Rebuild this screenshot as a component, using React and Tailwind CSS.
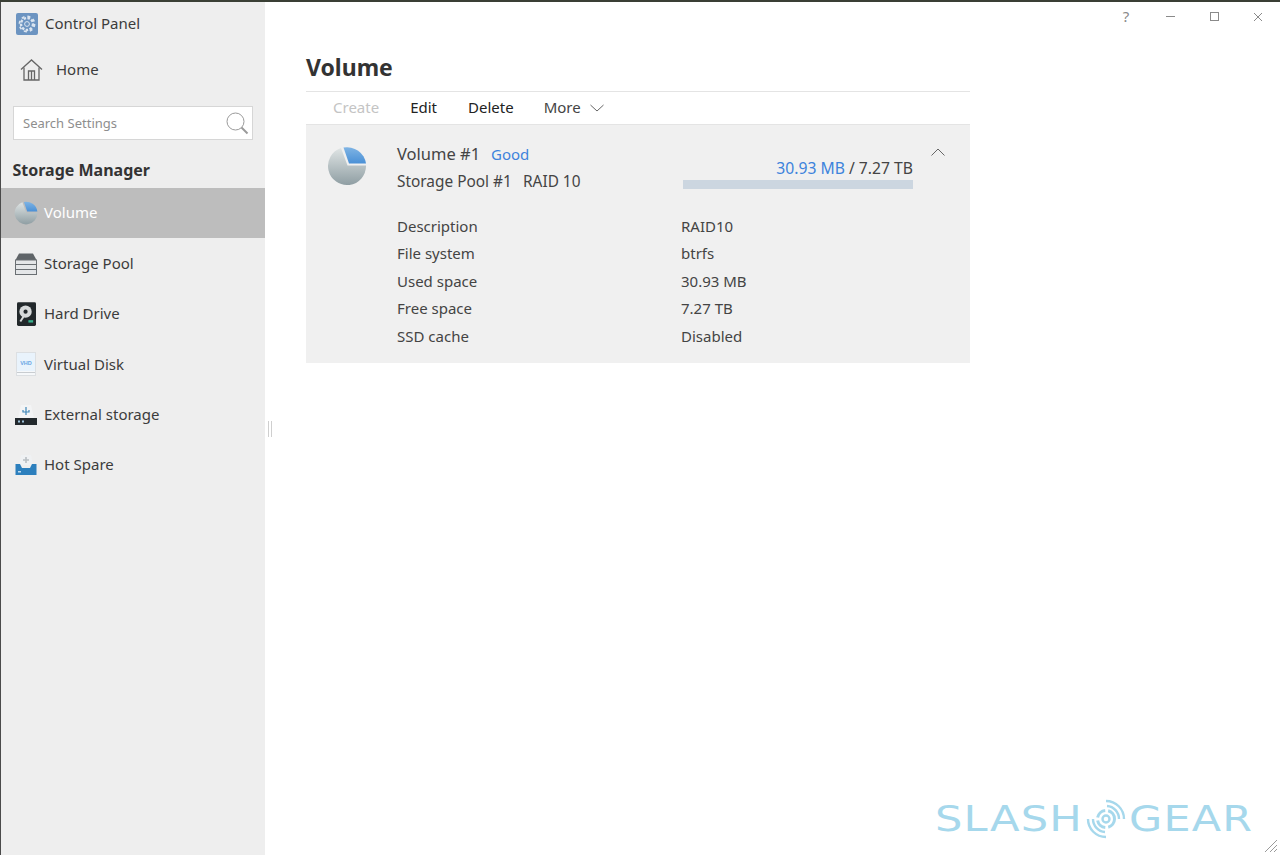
import React from "react";

const PieIcon = ({ size = 40 }) => (
  <svg width={size} height={size} viewBox="0 0 40 40">
    <defs>
      <linearGradient id="pieGrey" x1="0" y1="0" x2="0" y2="1">
        <stop offset="0" stopColor="#dfe4e4" />
        <stop offset="1" stopColor="#8f9ea3" />
      </linearGradient>
      <linearGradient id="pieBlue" x1="0" y1="0" x2="0" y2="1">
        <stop offset="0" stopColor="#7fb4e4" />
        <stop offset="1" stopColor="#4a90d6" />
      </linearGradient>
    </defs>
    <path d="M14 2 L20.5 19.5 L39 19.5 A19 19 0 1 1 14 2 Z" fill="url(#pieGrey)" />
    <path d="M16.5 1.6 A19 19 0 0 1 39 17.5 L22 17.5 Z" fill="url(#pieBlue)" />
  </svg>
);

const PoolIcon = () => (
  <svg width="22" height="22" viewBox="0 0 22 22">
    <path d="M4 0.5 H18 L21.5 7 H0.5 Z" fill="#5f6468" />
    <rect x="0.5" y="7" width="21" height="14.5" fill="#e4e6e8" stroke="#6a6f73" />
    <path d="M1 11.5 H21 M1 16.5 H21" stroke="#6a6f73" />
  </svg>
);

const DriveIcon = () => (
  <svg width="19" height="24" viewBox="0 0 20 25">
    <rect width="20" height="25" rx="1.5" fill="#22282b" />
    <circle cx="9" cy="10" r="6.5" fill="#d7dadb" />
    <circle cx="9" cy="10" r="2.2" fill="#22282b" />
    <path d="M7 15 L3.5 20.5" stroke="#d7dadb" strokeWidth="2" />
    <rect x="12" y="19" width="5" height="2.5" fill="#37b28e" />
  </svg>
);

const DiskIcon = () => (
  <svg width="20" height="24" viewBox="0 0 20 24">
    <rect x="0.5" y="0.5" width="19" height="23" fill="#f6f8fa" stroke="#dcdfe2" />
    <rect x="1" y="1" width="18" height="18" fill="#e9f3fc" />
    <path d="M1 20.5 H19" stroke="#c8ccd0" />
    <text x="10" y="12.5" textAnchor="middle" fontSize="5.5" fontWeight="700" fill="#6aa6e4" fontFamily="Liberation Sans, sans-serif">VHD</text>
  </svg>
);

const ExternalIcon = () => (
  <svg width="22" height="22" viewBox="0 0 22 22">
    <path d="M3 14 L6 1 H16 L19 14 Z" fill="#f3f4f5" />
    <path d="M11 3 V11 M8 6 V8 H14 V6" stroke="#3f86b8" strokeWidth="1.2" fill="none" />
    <rect y="14" width="22" height="7" fill="#23292d" />
    <rect x="3" y="16.5" width="2" height="2" fill="#9ec3dc" />
    <rect x="7" y="16.5" width="2" height="2" fill="#9ec3dc" />
  </svg>
);

const SpareIcon = () => (
  <svg width="22" height="22" viewBox="0 0 22 22">
    <path d="M4 11 L6 1 H16 L18 11 Z" fill="#eff1f3" />
    <path d="M11 3 V9 M8 6 H14" stroke="#b9bfc4" strokeWidth="1.6" />
    <path d="M0.5 10 H5 L7 14 H15 L17 10 H21.5 V21 H0.5 Z" fill="#2c7fbd" />
    <rect x="3" y="17" width="3" height="1.5" fill="#bcd9ee" />
  </svg>
);

const navItems = [
  { label: "Volume", icon: <PieIcon size={24} />, active: true },
  { label: "Storage Pool", icon: <PoolIcon /> },
  { label: "Hard Drive", icon: <DriveIcon /> },
  { label: "Virtual Disk", icon: <DiskIcon /> },
  { label: "External storage", icon: <ExternalIcon /> },
  { label: "Hot Spare", icon: <SpareIcon /> },
];

const details = [
  ["Description", "RAID10"],
  ["File system", "btrfs"],
  ["Used space", "30.93 MB"],
  ["Free space", "7.27 TB"],
  ["SSD cache", "Disabled"],
];

const Sidebar = () => (
  <aside className="w-[265px] shrink-0 bg-[#eeeeee] border-l border-[#4a4a4a] text-[#3c3c3c]">
    <div className="h-[43px] flex items-center pl-[15px] gap-[7px] text-[15px]">
      <svg width="22" height="22" viewBox="0 0 22 22">
        <rect width="22" height="22" rx="2" fill="#6c94c1" />
        <circle cx="11" cy="11" r="6" fill="none" stroke="#dbe5f0" strokeWidth="2.4" strokeDasharray="2.6 1.4" />
        <circle cx="11" cy="11" r="7.6" fill="none" stroke="#dbe5f0" strokeWidth="1.6" strokeDasharray="3 3" />
        <circle cx="11" cy="11" r="2.4" fill="none" stroke="#dbe5f0" />
      </svg>
      <span className="-mt-[1px]">Control Panel</span>
    </div>
    <div className="h-[50px] flex items-center pl-[19px] gap-[13px] text-[15px]">
      <svg className="-mt-[1px]" width="23" height="22" viewBox="0 0 23 22" fill="none" stroke="#666" strokeWidth="1.3">
        <path d="M1 10.5 L11.5 1 L22 10.5" />
        <path d="M4 8.5 V21 H19 V8.5" />
        <path d="M8.5 21 V12 H14.5 V21 M11.5 12 V21" />
      </svg>
      <span className="-mt-[2px]">Home</span>
    </div>
    <div className="mt-[11px] ml-[12px] w-[240px] h-[34px] bg-white border border-[#d6d6d6] flex items-center justify-between pl-[9px] pr-[3px] text-[13px] text-[#8e8e8e]">
      <span className="mt-[2px]">Search Settings</span>
      <svg width="23" height="23" viewBox="0 0 23 23" fill="none" stroke="#9a9a9a">
        <circle cx="9.5" cy="9.5" r="8.5" />
        <path d="M15.5 15.5 L21.5 21.5" strokeWidth="2" />
      </svg>
    </div>
    <h2 className="mt-[20px] ml-[11.5px] h-[28px] text-[16px] leading-[21px] font-bold text-[#333333]">Storage Manager</h2>
    <nav>
      {navItems.map((item) => (
        <div
          key={item.label}
          className={`h-[50.4px] flex items-center text-[15px] ${item.active ? "bg-[#bdbdbd] text-white" : ""}`}
        >
          <span className="w-[43px] pl-[7px] flex justify-center shrink-0">{item.icon}</span>
          <span className="-mt-[1px]">{item.label}</span>
        </div>
      ))}
    </nav>
  </aside>
);

const VolumeCard = () => (
  <div className="bg-[#f0f0f0] h-[238px] flex pt-[21px] text-[15px] text-[#444444]">
    <div className="w-[91px] pl-[21px] shrink-0">
      <PieIcon />
    </div>
    <div className="w-[516px] shrink-0">
      <div className="flex h-[56px]">
        <div className="w-[286px] -mt-[6px] leading-[28px]">
          <div className="flex items-baseline">
            <span className="w-[94px] text-[16.5px]">Volume #1</span>
            <span className="text-[#3d83dc]">Good</span>
          </div>
          <div className="flex items-baseline text-[15.4px]">
            <span className="w-[126px]">Storage Pool #1</span>
            <span>RAID 10</span>
          </div>
        </div>
        <div className="w-[230px] pt-[11px]">
          <div className="text-right text-[15.7px] leading-[23px]">
            <span className="text-[#3d83dc]">30.93 MB</span> / 7.27 TB
          </div>
          <div className="h-[9px] bg-[#ccd6e0]"></div>
        </div>
      </div>
      <div className="mt-[10.5px] leading-[27.5px]">
        {details.map(([name, value]) => (
          <div key={name} className="flex">
            <span className="w-[284px] shrink-0">{name}</span>
            <span>{value}</span>
          </div>
        ))}
      </div>
    </div>
    <div className="ml-[18px] pt-[2px]">
      <svg width="14" height="8" viewBox="0 0 14 8" fill="none" stroke="#666">
        <path d="M0.5 7.5 L7 1 L13.5 7.5" />
      </svg>
    </div>
  </div>
);

const App = () => (
  <div className="relative h-[855px] overflow-hidden bg-[#3a3f35] pt-[2px] font-['Noto_Sans','Open_Sans',sans-serif]">
    <div className="flex h-[853px] bg-white">
      <Sidebar />
      <main className="flex-1 flex flex-col">
        <div className="h-[29px] flex justify-end items-center text-[#8a8a8a]">
          <span className="w-[44px] text-center text-[15px]">?</span>
          <span className="w-[44px] flex justify-center"><span className="block w-[9px] h-px bg-[#8a8a8a]"></span></span>
          <span className="w-[44px] flex justify-center"><span className="block w-[9px] h-[9px] border border-[#8a8a8a]"></span></span>
          <span className="w-[44px] flex justify-center">
            <svg width="10" height="10" viewBox="0 0 10 10" stroke="#8a8a8a"><path d="M1 1 L9 9 M9 1 L1 9" /></svg>
          </span>
        </div>
        <div className="ml-[41px] w-[664px]">
          <h1 className="h-[60px] pt-[18px] text-[23px] leading-[36px] font-bold text-[#333333]">Volume</h1>
          <div className="h-[34px] pb-[1px] border-y border-[#e4e4e4] flex items-center text-[15px] text-[#222222]">
            <span className="ml-[27px] text-[#c4c4c4]">Create</span>
            <span className="ml-[31px]">Edit</span>
            <span className="ml-[31px]">Delete</span>
            <span className="ml-[30px] text-[#444444]">More</span>
            <svg className="ml-[9px] mt-[1px]" width="14" height="8" viewBox="0 0 14 8" fill="none" stroke="#666">
              <path d="M0.5 1 L7 7 L13.5 1" />
            </svg>
          </div>
          <VolumeCard />
        </div>
      </main>
    </div>

    {/* splitter handle */}
    <div className="absolute left-[268px] top-[421px] w-[4px] h-[16px] border-x border-[#cfcfcf]"></div>

    {/* watermark */}
    <div className="absolute left-[935px] top-[797px] flex items-center text-[#a6d8ec] font-['DejaVu_Sans',sans-serif] text-[36px] leading-[44px]">
      <span className="w-[150px] tracking-[1px] scale-x-[1.2] origin-left">SLASH</span>
      <svg width="42" height="40" viewBox="0 0 42 40" fill="none" stroke="#a6d8ec" strokeWidth="2.4" className="mr-[2px]">
        <circle cx="21" cy="20" r="3.5" />
        <circle cx="21" cy="20" r="8.5" strokeWidth="3" strokeDasharray="11 3" />
        <path d="M22 7 A13 13 0 0 1 34 20 M21 2 A18 18 0 0 1 39 20" />
        <path d="M20 33 A13 13 0 0 1 8 20 M21 38 A18 18 0 0 1 3 20" />
      </svg>
      <span className="w-[122px] tracking-[1px] scale-x-[1.19] origin-left">GEAR</span>
    </div>

    {/* resize grip */}
    <svg className="absolute right-[3px] bottom-[3px]" width="12" height="12" viewBox="0 0 12 12" stroke="#9a9a9a">
      <path d="M0 12 L12 0 M5 12 L12 5 M9 12 L12 9" />
    </svg>
  </div>
);

export default App;
